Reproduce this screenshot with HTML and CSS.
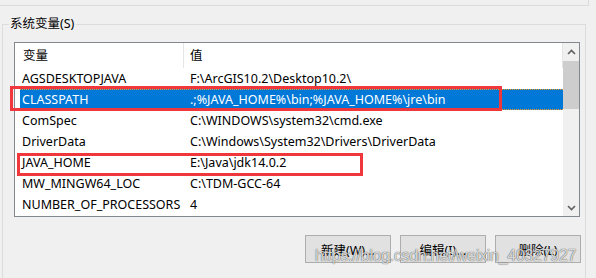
FILE: index.html
```html
<!DOCTYPE html>
<html lang="zh-CN">
<head>
  <meta charset="UTF-8">
  <title>系统变量</title>
  <link rel="stylesheet" href="styles.css">
</head>
<body>

  <div class="prev-group"></div>

  <div class="group">
    <div class="legend">系统变量(S)</div>

    <div class="listbox">
      <div class="table">
        <div class="head">
          <div class="head-cell name">变量</div>
          <div class="head-cell value">值</div>
        </div>
        <div class="row"><span class="c1">AGSDESKTOPJAVA</span><span class="c2">F:\ArcGIS10.2\Desktop10.2\</span></div>
        <div class="row selected"><span class="c1">CLASSPATH</span><span class="c2">.;%JAVA_HOME%\bin;%JAVA_HOME%\jre\bin</span></div>
        <div class="row"><span class="c1">ComSpec</span><span class="c2">C:\WINDOWS\system32\cmd.exe</span></div>
        <div class="row"><span class="c1">DriverData</span><span class="c2">C:\Windows\System32\Drivers\DriverData</span></div>
        <div class="row"><span class="c1">JAVA_HOME</span><span class="c2">E:\Java\jdk14.0.2</span></div>
        <div class="row"><span class="c1">MW_MINGW64_LOC</span><span class="c2">C:\TDM-GCC-64</span></div>
        <div class="row"><span class="c1">NUMBER_OF_PROCESSORS</span><span class="c2">4</span></div>
      </div>

      <div class="scrollbar">
        <div class="arrow">
          <svg width="9" height="6" viewBox="0 0 9 6"><path d="M1 5 L4.5 1.5 L8 5" fill="none" stroke="#606060" stroke-width="1.6"/></svg>
        </div>
        <div class="track"><div class="thumb"></div></div>
        <div class="arrow">
          <svg width="9" height="6" viewBox="0 0 9 6"><path d="M1 1 L4.5 4.5 L8 1" fill="none" stroke="#606060" stroke-width="1.6"/></svg>
        </div>
      </div>
    </div>

    <div class="buttons">
      <button class="btn">新建(W)...</button>
      <button class="btn">编辑(I)...</button>
      <button class="btn">删除(L)</button>
    </div>
  </div>

  <!-- annotation marks drawn over the screenshot -->
  <div class="mark mark-classpath"></div>
  <div class="mark mark-javahome"></div>
  <div class="watermark">https://blog.csdn.net/weixin_40327927</div>

</body>
</html>
```

FILE: styles.css
```css
body {
  margin: 0;
  width: 596px;
  height: 278px;
  overflow: hidden;
  position: relative;
  background-color: #f0f0f0;
  font-family: "Noto Sans", "Noto Sans CJK SC", sans-serif;
  font-size: 12.5px;
  color: #000;
}
.prev-group {
  width: 588px;
  height: 5px;
  border-right: 1px solid #dcdcdc;
  border-bottom: 1px solid #dcdcdc;
}
.group {
  margin: 18px 0 0 2px;
  width: 582px;
  height: 260px;
  border: 1px solid #dcdcdc;
  border-bottom: none;
}
.legend {
  width: fit-content;
  height: 16px;
  line-height: 16px;
  margin: -9px 0 0 6px;
  padding: 0 2px 0 1px;
  background-color: #f0f0f0;
  color: #000;
}
.listbox {
  display: flex;
  margin: 10px 0 0 11px;
  width: 564px;
  height: 173px;
  border: 1px solid #828790;
  background-color: #fff;
}
.table {
  width: 548px;
}
.head {
  display: flex;
  height: 25px;
  line-height: 25px;
}
.head-cell.name {
  width: 160px;
  padding-left: 8px;
  border-right: 1px solid #e5e5e5;
}
.head-cell.value {
  flex: 1;
  padding-left: 6px;
  border-right: 1px solid #e5e5e5;
}
.row {
  display: flex;
  height: 21px;
  line-height: 21px;
  margin-left: 5px;
  white-space: nowrap;
}
.row .c1 {
  width: 161px;
  padding-left: 2px;
}
.row .c2 {
  padding-left: 7px;
}
.row.selected {
  height: 19px;
  line-height: 19px;
  background-color: #0078d7;
  color: #fff;
  border-top: 1px dotted #f59a23;
  border-bottom: 1px dotted #f59a23;
}
.scrollbar {
  width: 16px;
  display: flex;
  flex-direction: column;
  background-color: #f0f0f0;
}
.arrow {
  height: 17px;
  display: flex;
  align-items: center;
  justify-content: center;
}
.track {
  flex: 1;
}
.thumb {
  height: 48px;
  margin-top: 1px;
  background-color: #cdcdcd;
}
.buttons {
  display: flex;
  gap: 9px;
  margin: 18px 0 0 302px;
}
.btn {
  width: 86px;
  height: 28px;
  padding: 0;
  border: 1px solid #adadad;
  background-color: #e1e1e1;
  font-family: "Noto Sans", "Noto Sans CJK SC", sans-serif;
  font-size: 12.5px;
  color: #000;
}
.mark {
  position: absolute;
  border: 3px solid #f0383c;
  box-sizing: border-box;
}
.mark-classpath {
  left: 10px;
  top: 86px;
  width: 492px;
  height: 25px;
}
.mark-javahome {
  left: 17px;
  top: 153px;
  width: 346px;
  height: 23px;
}
.watermark {
  position: absolute;
  left: 315px;
  top: 247px;
  font-family: "Liberation Sans", sans-serif;
  font-size: 16px;
  letter-spacing: -0.3px;
  color: rgba(255, 255, 255, 0.8);
  text-shadow: 0 0 1px rgba(0, 0, 0, 0.6), 0 0 1px rgba(0, 0, 0, 0.4);
  white-space: nowrap;
}
```
